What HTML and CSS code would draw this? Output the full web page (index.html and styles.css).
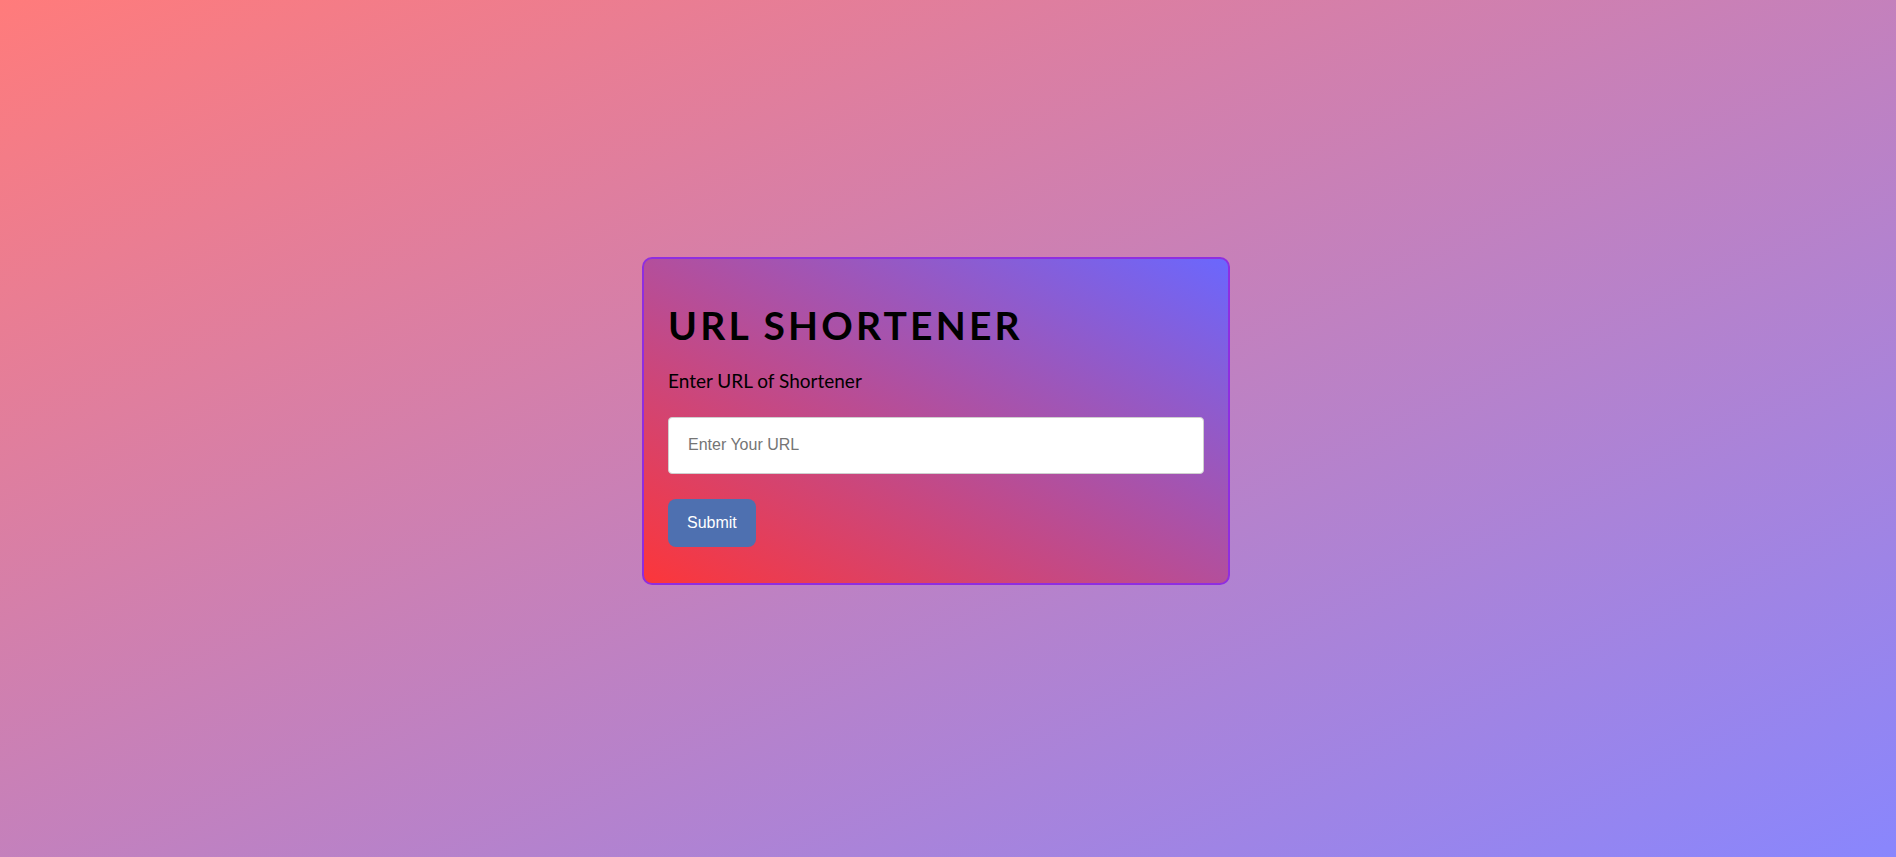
FILE: index.html
```html
<!DOCTYPE html>
<html lang="en">
<head>
<meta charset="utf-8">
<title>URL Shortener</title>
<link rel="stylesheet" href="styles.css">
</head>
<body>
<main class="page">
  <section class="card">
    <h1 class="title">URL SHORTENER</h1>
    <p class="subtitle">Enter URL of Shortener</p>
    <form class="form">
      <input class="url-input" type="text" placeholder="Enter Your URL">
      <button class="submit" type="button">Submit</button>
    </form>
  </section>
</main>
</body>
</html>
```
FILE: styles.css
```css
* { box-sizing: border-box; }
html, body { margin: 0; padding: 0; }
body {
  min-height: 100vh;
  background: linear-gradient(to bottom right, #ff7b7b, #8986fd);
  font-family: "Lato", "Liberation Sans", sans-serif;
}
.page {
  min-height: 100vh;
  display: flex;
  align-items: center;
  justify-content: center;
  padding: 0 24px 16px 0;
}
.card {
  width: 588px;
  padding: 24px 24px 36px 24px;
  border: 2px solid #8f2ee0;
  border-radius: 10px;
  background: linear-gradient(to top right, #fc363a, #6b67fd);
}
.title {
  margin: 19px 0 0 0;
  font-size: 39px;
  line-height: 46px;
  font-weight: 700;
  color: #000;
  letter-spacing: 3.2px;
}
.subtitle {
  margin: 21px 0 0 0;
  font-size: 19px;
  line-height: 23px;
  color: #000;
}
.form {
  display: flex;
  flex-direction: column;
  align-items: flex-start;
  gap: 25px;
  margin-top: 25px;
}
.url-input {
  width: 100%;
  height: 57px;
  padding: 0 19px;
  border: 1px solid #cfcfcf;
  border-radius: 4px;
  background: #fff;
  font-family: "Liberation Sans", Arial, sans-serif;
  font-size: 16px;
  color: #333;
  outline: none;
}
.url-input::placeholder { color: #757575; }
.submit {
  height: 48px;
  padding: 0 19px;
  border: none;
  border-radius: 8px;
  background: #4e70b0;
  color: #fff;
  font-family: "Liberation Sans", Arial, sans-serif;
  font-size: 16px;
  cursor: pointer;
}
```
